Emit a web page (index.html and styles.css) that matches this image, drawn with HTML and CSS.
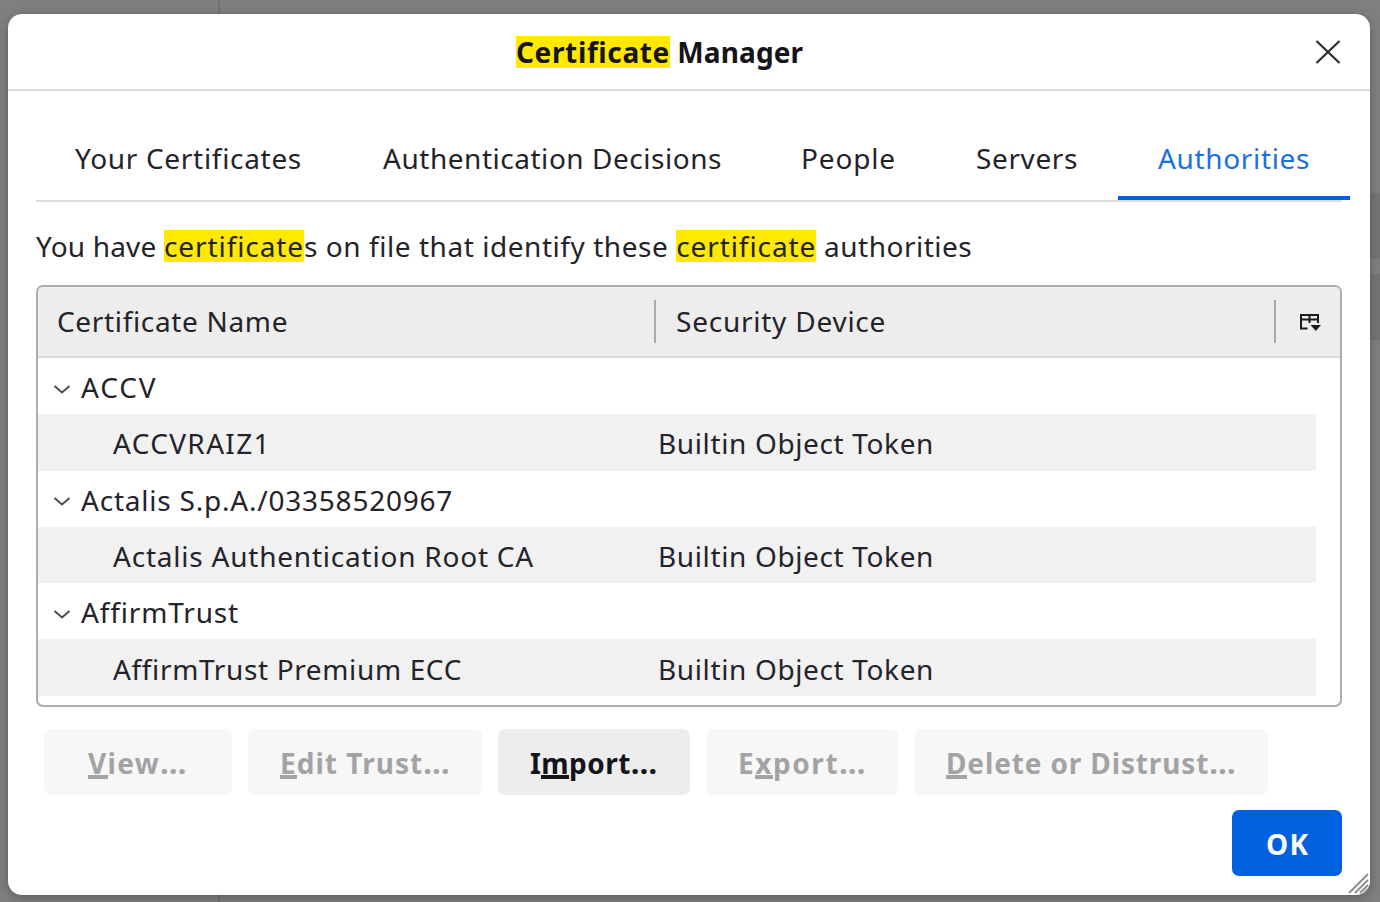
FILE: index.html
```
<!DOCTYPE html>
<html lang="en">
<head>
<meta charset="utf-8">
<title>Certificate Manager</title>
<link rel="stylesheet" href="styles.css">
</head>
<body>
<div class="backdrop">
  <div class="sidebar"></div>
  <div class="content"><div class="block first"></div><div class="block"></div></div>
</div>
<main class="dialog">
  <header class="titlebar">
    <h1><mark>Certificate</mark><span class="rest">&nbsp;Manager</span></h1>
    <svg class="close" viewBox="0 0 26 26"><path d="M1.500 2 24.500 24M24.500 2 1.500 24"/></svg>
  </header>
  <nav class="tabs">
    <a class="tab yours">Your Certificates</a>
    <a class="tab decisions">Authentication Decisions</a>
    <a class="tab people">People</a>
    <a class="tab servers">Servers</a>
    <a class="tab authorities active">Authorities</a>
  </nav>
  <p class="intro"><span class="lead">You have&nbsp;</span><mark>certificate</mark><span class="mid">s on file that identify these&nbsp;</span><mark>certificate</mark><span class="tail">&nbsp;authorities</span></p>
  <section class="tree">
    <div class="head">
      <div class="col name">Certificate Name</div>
      <div class="col device">Security Device</div>
      <div class="picker"><svg viewBox="0 0 22 20"><path d="M2 2v14.500h6.500M1 3h18v8M2 7.500h17M10.500 3v8"/><path class="arrow" d="M11.500 13h10.500l-5.200 6z"/></svg></div>
    </div>
    <div class="row group"><svg class="twisty" viewBox="0 0 18 10"><path d="M1.500 1l7.500 6.500L16.500 1"/></svg><span class="accv">ACCV</span></div>
    <div class="row item"><span class="cell raiz">ACCVRAIZ1</span><span class="token">Builtin Object Token</span></div>
    <div class="row group"><svg class="twisty" viewBox="0 0 18 10"><path d="M1.500 1l7.500 6.500L16.500 1"/></svg><span class="actalis">Actalis S.p.A./03358520967</span></div>
    <div class="row item"><span class="cell root">Actalis Authentication Root CA</span><span class="token">Builtin Object Token</span></div>
    <div class="row group"><svg class="twisty" viewBox="0 0 18 10"><path d="M1.500 1l7.500 6.500L16.500 1"/></svg><span class="affirm">AffirmTrust</span></div>
    <div class="row item"><span class="cell premium">AffirmTrust Premium ECC</span><span class="token">Builtin Object Token</span></div>
  </section>
  <div class="actions">
    <button class="view" disabled><u>V</u>iew<span class="dots">…</span></button>
    <button class="edit" disabled><u>E</u>dit Trust<span class="dots">…</span></button>
    <button class="import">I<u>m</u>port<span class="dots">…</span></button>
    <button class="export" disabled>E<u>x</u>port<span class="dots">…</span></button>
    <button class="delete" disabled><u>D</u>elete or Distrust<span class="dots">…</span></button>
  </div>
  <footer class="footer"><button class="ok">OK</button></footer>
  <svg class="grip" viewBox="0 0 22 22"><path d="M1 20 20 1M7 20 20 7M12 20 20 12M16 20 20 16"/></svg>
</main>
</body>
</html>
```
FILE: styles.css
```
* { box-sizing: border-box; }
body {
  margin: 0; width: 1380px; height: 902px; overflow: hidden; position: relative;
  background: #7f7f7f; color: #24232a;
  font: 28px/36px "Noto Sans", sans-serif;
}
.backdrop { position: absolute; inset: 0; display: flex; }
.sidebar { width: 220px; border-right: 2px solid #707070; }
.content { flex: 1; display: flex; flex-direction: column; align-items: flex-end; padding-top: 193px; gap: 15px; }
.block { width: 12px; height: 66px; background: #757575; }

.dialog {
  position: absolute; left: 8px; top: 14px; width: 1362px; height: 881px;
  background: #fff; border-radius: 14px; box-shadow: 0 3px 12px rgba(0,0,0,.25), 0 0 1px rgba(0,0,0,.2);
  display: flex; flex-direction: column;
}
.titlebar {
  height: 77px; flex: none; border-bottom: 2px solid #dadada;
  display: flex; align-items: center; padding: 0 29px 0 508px; justify-content: space-between;
}
h1 { margin: 0; font-size: 28px; line-height: 32px; color: #15141a; display: flex; }
mark { background: #ffe900; color: inherit; }
h1 mark { letter-spacing: .63px; }
.rest { letter-spacing: .1px; }
.close { width: 26px; height: 26px; fill: none; stroke: #2a292f; stroke-width: 2.2; }

.tabs { display: flex; flex: none; height: 111px; margin: 0 20px 0 28px; position: relative; }
.tabs::before { content: ""; position: absolute; left: 0; right: 8px; bottom: 0; height: 2px; background: #dcdcdc; }
.tab { padding: 49px 0 0 40px; white-space: nowrap; position: relative; height: 109px; }
.yours { width: 307px; letter-spacing: .69px; padding-left: 39px; }
.decisions { width: 421px; letter-spacing: .53px; }
.people { width: 174px; letter-spacing: .85px; padding-left: 37px; }
.servers { width: 180px; letter-spacing: .61px; padding-left: 38px; }
.authorities { width: 232px; letter-spacing: .65px; }
.active { color: #1a6fe4; border-bottom: 4px solid #0061e0; }

.intro { margin: 28px 28px 0; display: flex; flex: none; line-height: 32px; white-space: nowrap; }
.lead { letter-spacing: .19px; }
.intro mark { letter-spacing: .91px; }
.mid { letter-spacing: .55px; }
.tail { letter-spacing: .5px; }

.tree {
  margin: 23px 28px 0; height: 422px; flex: none; overflow: hidden;
  border: 2px solid #adadad; border-radius: 7px; background: #fff;
}
.head { display: flex; align-items: center; height: 71px; background: #ededed; border-bottom: 2px solid #d9d9d9; }
.col { height: 43px; line-height: 43px; border-right: 2px solid #a9a9ab; padding-left: 19px; }
.name { width: 618px; letter-spacing: .66px; }
.device { width: 620px; letter-spacing: .76px; padding-left: 20px; }
.picker { flex: 1; display: flex; align-items: center; padding-left: 23px; }
.picker svg { width: 22px; height: 20px; fill: none; stroke: #1c1b22; stroke-width: 2; }
.picker .arrow { fill: #1c1b22; stroke: none; }
.row { height: 56.3px; line-height: 53px; padding-top: 3px; display: flex; align-items: center; white-space: nowrap; }
.group { padding-left: 15px; gap: 10px; }
.item { width: 1278px; padding-left: 75px; background: #f1f1f1; }
.twisty { width: 18px; height: 10px; margin-top: 4px; fill: none; stroke: #4c4b52; stroke-width: 2; }
.cell { width: 545px; }
.accv { letter-spacing: 1.9px; }
.raiz { letter-spacing: 1.35px; }
.token { letter-spacing: .63px; }
.actalis { letter-spacing: .78px; }
.root { letter-spacing: .78px; }
.affirm { letter-spacing: .85px; }
.premium { letter-spacing: .64px; }

.actions { display: flex; flex: none; gap: 16px; margin: 22px 0 0 36px; }
button {
  height: 66px; border: 0; border-radius: 7px; padding: 2px 0 0 32px; text-align: left; white-space: nowrap;
  font: bold 28px/60px "Noto Sans", sans-serif; background: #ededed; color: #15141a;
}
button:disabled { background: #f7f7f7; color: #a3a3a5; }
u { text-decoration: none; box-shadow: 0 4px currentColor; display: inline-block; line-height: 23px; }
.dots { font-size: 31px; line-height: 0; letter-spacing: 0; }
.view { width: 188px; padding-left: 44px; letter-spacing: 1.35px; }
.edit { width: 234px; letter-spacing: 1.03px; }
.import { width: 192px; letter-spacing: .45px; }
.export { width: 192px; letter-spacing: 1.56px; }
.delete { width: 354px; letter-spacing: .86px; }
.footer { display: flex; justify-content: flex-end; margin: 15px 28px 0; }
.ok { width: 110px; padding-left: 34px; letter-spacing: 1.4px; color: #fbfbfe; background: #0061e0; }
.grip { position: absolute; right: 0; bottom: 0; width: 22px; height: 22px; fill: none; stroke: #8c8c8c; stroke-width: 1.8; }
```
